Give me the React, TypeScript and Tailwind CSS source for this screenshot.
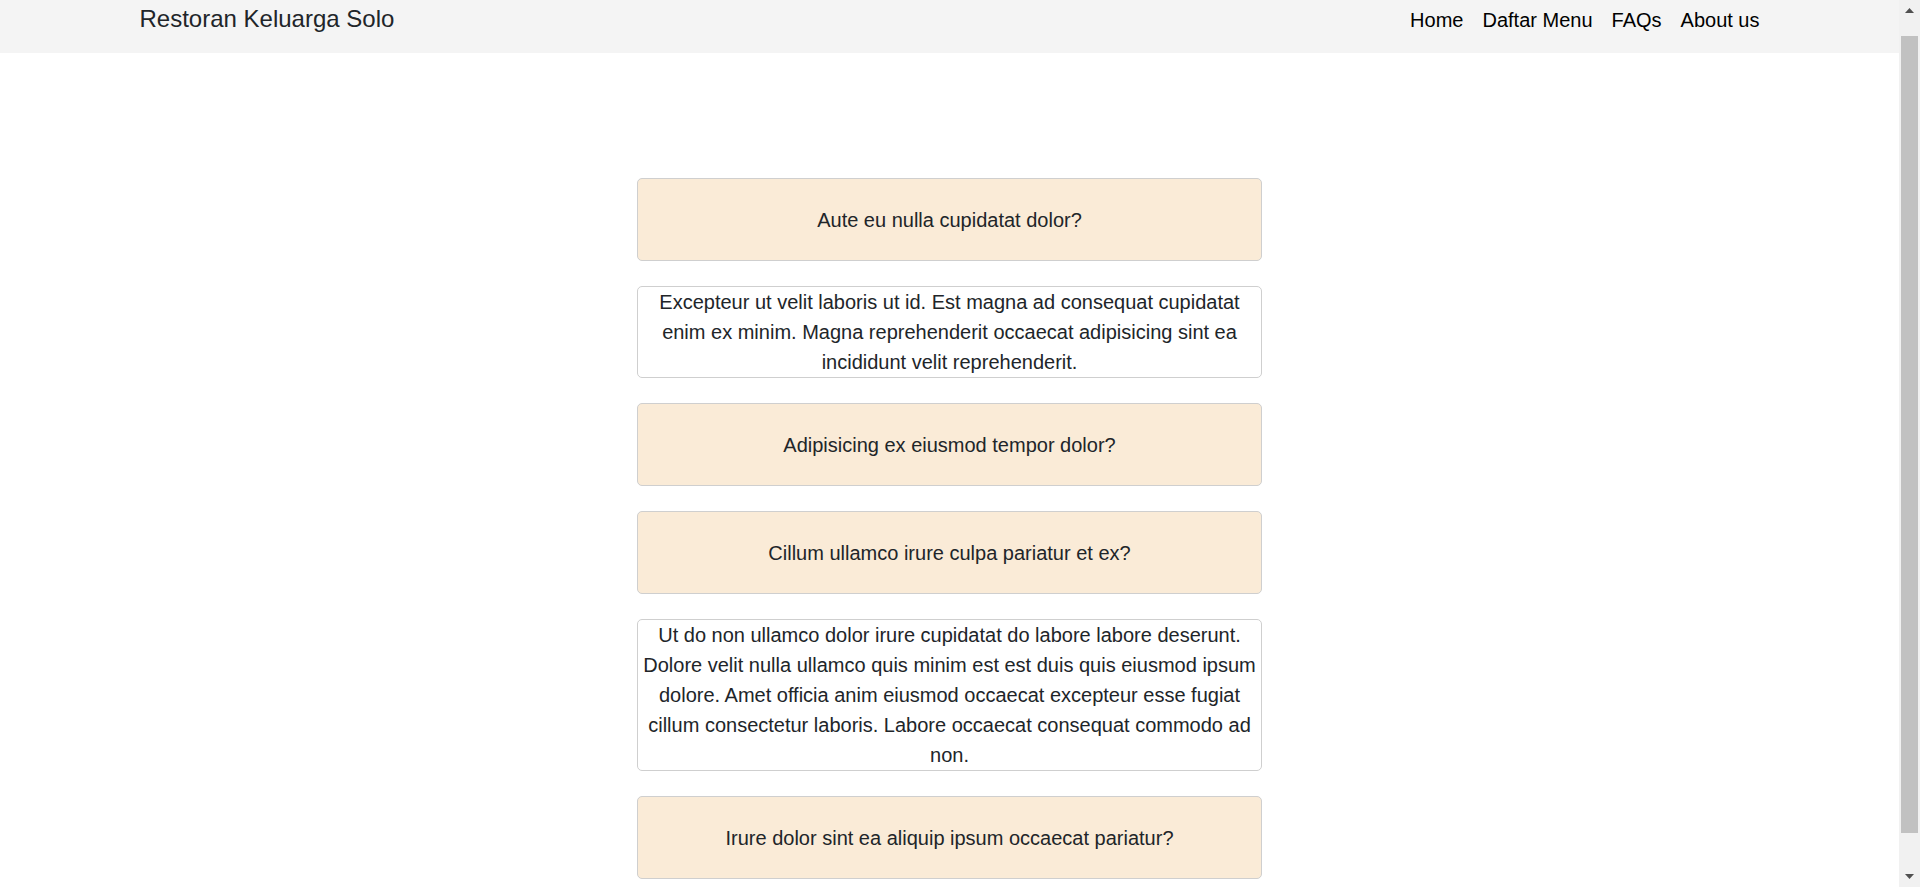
import React from "react";

const faqs: { type: "q" | "a"; text: string }[] = [
  { type: "q", text: "Aute eu nulla cupidatat dolor?" },
  {
    type: "a",
    text: "Excepteur ut velit laboris ut id. Est magna ad consequat cupidatat enim ex minim. Magna reprehenderit occaecat adipisicing sint ea incididunt velit reprehenderit.",
  },
  { type: "q", text: "Adipisicing ex eiusmod tempor dolor?" },
  { type: "q", text: "Cillum ullamco irure culpa pariatur et ex?" },
  {
    type: "a",
    text: "Ut do non ullamco dolor irure cupidatat do labore labore deserunt. Dolore velit nulla ullamco quis minim est est duis quis eiusmod ipsum dolore. Amet officia anim eiusmod occaecat excepteur esse fugiat cillum consectetur laboris. Labore occaecat consequat commodo ad non.",
  },
  { type: "q", text: "Irure dolor sint ea aliquip ipsum occaecat pariatur?" },
];

function Scrollbar() {
  return (
    <aside className="sticky top-0 h-[887px] w-[21px] shrink-0 bg-[#f1f1f1] flex flex-col items-center">
      <div className="h-[21px] w-full flex items-center justify-center">
        <svg width="9" height="5" viewBox="0 0 9 5">
          <path d="M0 5 L4.5 0 L9 5 Z" fill="#505050" />
        </svg>
      </div>
      <div className="h-[15px]" />
      <div className="w-[17px] h-[797px] bg-[#c1c1c1]" />
      <div className="flex-1" />
      <div className="h-[21px] w-full flex items-center justify-center">
        <svg width="9" height="5" viewBox="0 0 9 5">
          <path d="M0 0 L9 0 L4.5 5 Z" fill="#505050" />
        </svg>
      </div>
    </aside>
  );
}

export default function App() {
  return (
    <div
      className="flex min-h-screen bg-white text-[#212529]"
      style={{ fontFamily: '"Liberation Sans", Arial, sans-serif' }}
    >
      <div className="flex-1 min-w-0">
        <nav className="h-[53px] bg-[#f4f4f4]">
          <div className="w-[1620px] mx-auto flex items-baseline justify-between pt-[1px]">
            <a className="text-[24px] leading-[36px] text-[#212529]">Restoran Keluarga Solo</a>
            <ul className="flex items-baseline gap-[19px] text-[20px] leading-[30px] text-black">
              <li>Home</li>
              <li>Daftar Menu</li>
              <li>FAQs</li>
              <li>About us</li>
            </ul>
          </div>
        </nav>
        <main className="w-[625px] mx-auto mt-[125px] pb-[71px] flex flex-col gap-[25px] text-[20px] leading-[30px]">
          {faqs.map((f, i) =>
            f.type === "q" ? (
              <div
                key={i}
                className="h-[83px] rounded-[5px] border border-[#cfcfcf] bg-[#faebd7] flex items-center justify-center text-center"
              >
                {f.text}
              </div>
            ) : (
              <div
                key={i}
                className="rounded-[5px] border border-[#cfcfcf] bg-white text-center"
              >
                {f.text}
              </div>
            )
          )}
        </main>
      </div>
      <Scrollbar />
    </div>
  );
}
